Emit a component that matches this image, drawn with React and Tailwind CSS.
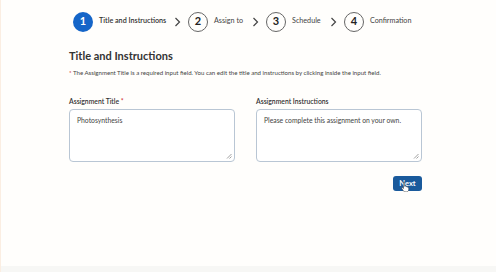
import React from 'react'

const steps = [
  { n: 1, label: 'Title and Instructions', w: 'w-[68px]', active: true },
  { n: 2, label: 'Assign to', w: 'w-[31px]' },
  { n: 3, label: 'Schedule', w: 'w-[31px]' },
  { n: 4, label: 'Confirmation', w: 'w-[50px]' },
]

function Chevron() {
  return (
    <div className="w-[21px] flex justify-center">
      <svg className="w-[7px] h-[10px] text-[#444]" viewBox="0 0 7 10" fill="none" stroke="currentColor" strokeWidth="1.2">
        <path d="M1.5 1 5.5 5 1.5 9" />
      </svg>
    </div>
  )
}

function Resize() {
  return (
    <svg className="absolute right-[2px] bottom-[2px] w-[6px] h-[6px] text-[#888]" viewBox="0 0 6 6" stroke="currentColor" strokeWidth="0.8">
      <path d="M5.5 1 1 5.5M5.5 3.5 3.5 5.5" />
    </svg>
  )
}

export default function App() {
  return (
    <div className="w-[496px] h-[272px] flex flex-col bg-[#fffefc] border-l border-l-[#fbeee2] overflow-hidden text-[#333]" style={{ fontFamily: 'Lato, "Open Sans", sans-serif' }}>
      {/* Stepper */}
      <div className="flex items-center h-[42px] pl-[72px] pt-[1px]">
        {steps.map((s, i) => (
          <React.Fragment key={s.n}>
            {i > 0 && <Chevron />}
            <div className="flex items-center">
              <div
                className={
                  s.active
                    ? 'w-[20px] h-[20px] rounded-full bg-[#1565c8] text-white flex items-center justify-center text-[11px] font-bold'
                    : 'w-[20px] h-[20px] rounded-full border border-[#666] text-[#222] flex items-center justify-center text-[11px] font-bold'
                }
              >
                {s.n}
              </div>
              <span className={(s.active ? 'font-semibold text-[#333] ' : 'text-[#444] ') + s.w + ' ml-[6px] text-[7.2px] whitespace-nowrap'}>{s.label}</span>
            </div>
          </React.Fragment>
        ))}
      </div>

      <div className="pl-[68px]">
        <h1 className="mt-[7px] text-[11px] font-bold text-[#333] leading-[14px]">Title and Instructions</h1>
        <p className="mt-[6px] text-[6.1px] text-[#444] leading-[8px] whitespace-nowrap">
          <span className="text-[#d32f2f]">*</span> The Assignment Title is a required input field. You can edit the title and instructions by clicking inside the input field.
        </p>

        <div className="flex mt-[20px] gap-[21px]">
          <div className="w-[166px]">
            <div className="text-[6.8px] font-semibold text-[#333] leading-[9px]">
              Assignment Title <span className="text-[#d32f2f]">*</span>
            </div>
            <div className="relative mt-[3px] h-[53px] border border-[#b9c6d4] rounded-[4px] bg-white px-[7px] pt-[6px] text-[6.8px] leading-[9px] text-[#444]">
              Photosynthesis
              <Resize />
            </div>
          </div>
          <div className="w-[166px]">
            <div className="text-[6.8px] font-semibold text-[#333] leading-[9px]">Assignment Instructions</div>
            <div className="relative mt-[3px] h-[53px] border border-[#b9c6d4] rounded-[4px] bg-white px-[7px] pt-[6px] text-[6.8px] leading-[9px] text-[#444]">
              Please complete this assignment on your own.
              <Resize />
            </div>
          </div>
        </div>

        <div className="flex justify-end mt-[14px] w-[353px]">
          <div className="relative flex">
            <button className="w-[29px] h-[15px] rounded-[3px] bg-[#1a5a9c] text-white text-[7.5px] font-bold leading-none">Next</button>
            <svg className="absolute left-[8px] top-[5px] w-[9px] h-[11px]" viewBox="0 0 9 11">
              <path d="M2.5 1.2c.6 0 1 .4 1 1v3l.8-.2c.5 0 .9.3.9.7l.7-.1c.5 0 .8.3.8.7.4-.1 1 .1 1 .7v1.6c0 1.2-.9 2.2-2.2 2.2H4c-.7 0-1.3-.4-1.7-1L.8 7.5c-.3-.5 0-1 .5-1 .3 0 .6.2.8.5l.4.5V2.2c0-.6.4-1 1-1z" fill="#fff" stroke="#333" strokeWidth="0.5" />
            </svg>
          </div>
        </div>
      </div>

      <div className="flex-1" />
      <div className="h-[6px] bg-[#f7f7f5]" />
    </div>
  )
}
